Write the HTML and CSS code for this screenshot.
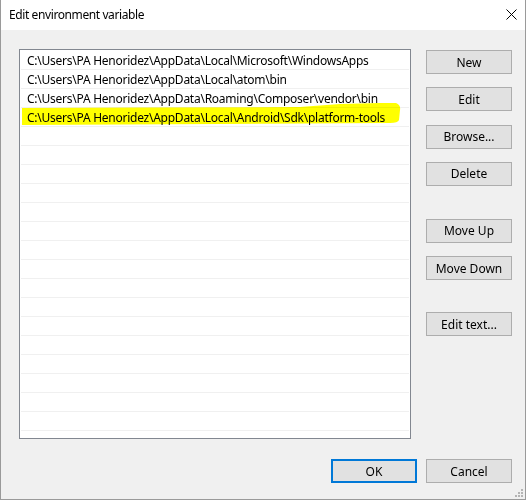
FILE: index.html
```html
<!DOCTYPE html>
<html>
<head>
<meta charset="utf-8">
<link rel="stylesheet" href="styles.css">
</head>
<body>
<div class="window">
  <div class="titlebar">
    <span class="title">Edit environment variable</span>
    <svg class="close" width="11" height="11" viewBox="0 0 11 11"><path d="M0.5 0.5 L10.5 10.5 M10.5 0.5 L0.5 10.5" stroke="#000" stroke-width="1" fill="none"/></svg>
  </div>
  <div class="content">
    <div class="main">
      <div class="list">
        <div class="row">C:\Users\PA Henoridez\AppData\Local\Microsoft\WindowsApps</div>
        <div class="row">C:\Users\PA Henoridez\AppData\Local\atom\bin</div>
        <div class="row">C:\Users\PA Henoridez\AppData\Roaming\Composer\vendor\bin</div>
        <div class="row">C:\Users\PA Henoridez\AppData\Local\Android\Sdk\platform-tools</div>
        <div class="row"></div><div class="row"></div><div class="row"></div><div class="row"></div>
        <div class="row"></div><div class="row"></div><div class="row"></div><div class="row"></div>
        <div class="row"></div><div class="row"></div><div class="row"></div><div class="row"></div>
        <div class="row"></div><div class="row"></div><div class="row"></div><div class="row"></div>
        <div class="row"></div><div class="row"></div>
        <svg class="highlight" width="390" height="388" viewBox="0 0 390 388"><path d="M2 58 L120 57.5 L280 57 L320 54 L360 53 L376 53 Q381 55 380 60 L379 70 Q378 73 370 73 L200 74 L2 75 Z" fill="#ffff00"/></svg>
      </div>
      <div class="side">
        <button class="btn">New</button>
        <button class="btn">Edit</button>
        <button class="btn">Browse...</button>
        <button class="btn">Delete</button>
        <button class="btn group">Move Up</button>
        <button class="btn">Move Down</button>
        <button class="btn group2">Edit text...</button>
      </div>
    </div>
    <div class="footer">
      <button class="btn ok">OK</button>
      <button class="btn">Cancel</button>
    </div>
  </div>
  <svg class="grip" width="9" height="9" viewBox="0 0 9 9" fill="#b4b4b4">
    <rect x="7" y="1" width="2" height="2"/>
    <rect x="4" y="4" width="2" height="2"/><rect x="7" y="4" width="2" height="2"/>
    <rect x="1" y="7" width="2" height="2"/><rect x="4" y="7" width="2" height="2"/><rect x="7" y="7" width="2" height="2"/>
  </svg>
</div>
</body>
</html>
```
FILE: styles.css
```css
html, body {
  margin: 0;
  padding: 0;
  background: #ffffff;
}
body {
  font-family: "Noto Sans", "Open Sans", sans-serif;
  font-size: 12px;
  color: #000;
}
.window {
  position: relative;
  box-sizing: border-box;
  width: 526px;
  height: 500px;
  border: 1px solid #9a9a9a;
  border-top: none;
  background: #f0f0f0;
  display: flex;
  flex-direction: column;
}
.titlebar {
  height: 30px;
  flex: none;
  background: #fff;
  display: flex;
  align-items: center;
  justify-content: space-between;
  padding: 0 8px 0 8px;
}
.title {
  font-size: 12px;
  letter-spacing: -0.4px;
  margin-top: -1px;
}
.close {
  display: block;
  margin-top: -2px;
}
.content {
  flex: 1;
  display: flex;
  flex-direction: column;
  padding: 19px 13px 16px 18px;
}
.main {
  display: flex;
  gap: 15px;
}
.list {
  position: relative;
  box-sizing: border-box;
  width: 392px;
  height: 390px;
  border: 1px solid #828790;
  background: #fff;
  padding-top: 1px;
  overflow: hidden;
}
.row {
  position: relative;
  z-index: 1;
  height: 18px;
  line-height: 20px;
  margin: 0 1px;
  padding-left: 6px;
  border-bottom: 1px solid #f0f0f0;
  white-space: nowrap;
  letter-spacing: -0.25px;
  mix-blend-mode: multiply;
}
.highlight {
  position: absolute;
  left: 0;
  top: 0;
  z-index: 0;
}
.side {
  display: flex;
  flex-direction: column;
  gap: 13.33px;
  padding-top: 1px;
}
.btn {
  box-sizing: border-box;
  width: 86px;
  height: 24px;
  margin: 0;
  padding: 0;
  border: 1px solid #adadad;
  background: #e1e1e1;
  font-family: "Noto Sans", "Open Sans", sans-serif;
  font-size: 12px;
  color: #000;
}
.group {
  margin-top: 19.67px;
}
.group2 {
  margin-top: 18.67px;
}
.footer {
  margin-top: auto;
  display: flex;
  justify-content: flex-end;
  gap: 9px;
}
.ok {
  border: 2px solid #0078d7;
}
.grip {
  position: absolute;
  right: 2px;
  bottom: 2px;
}
```
